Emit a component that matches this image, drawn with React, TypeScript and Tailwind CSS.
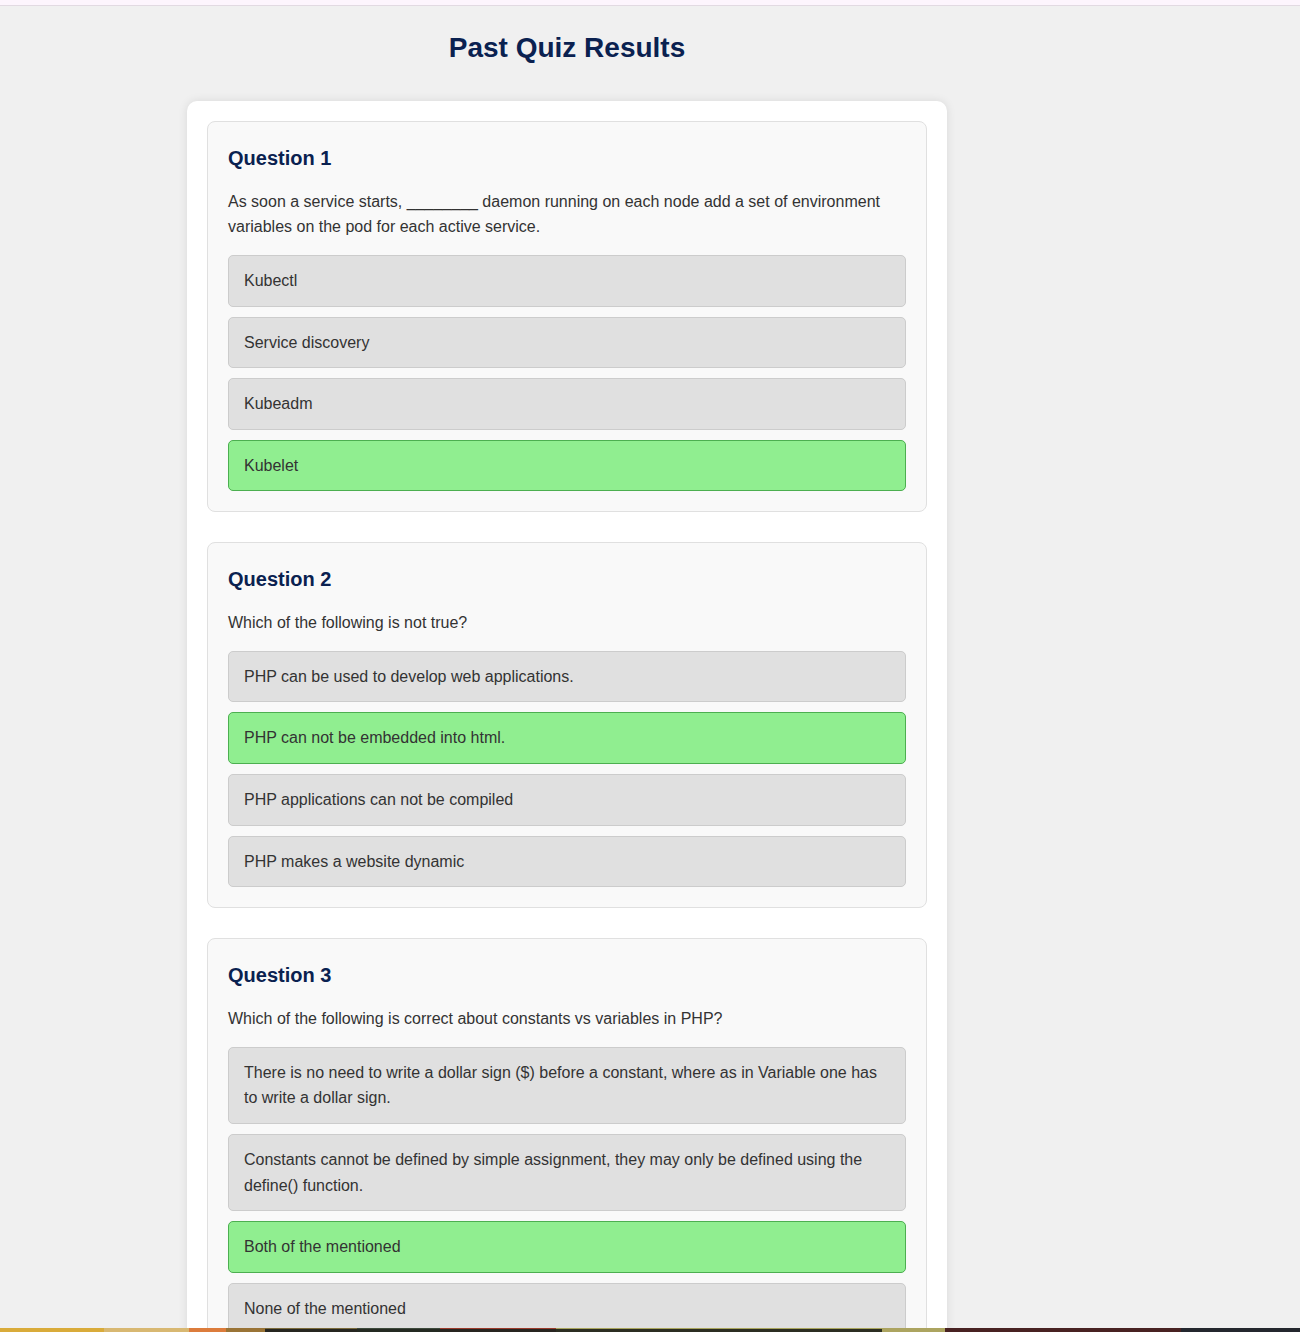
import React from "react";

type Q = { title: string; text: string; options: string[]; correct: number };

const questions: Q[] = [
  {
    title: "Question 1",
    text: "As soon a service starts, ________ daemon running on each node add a set of environment variables on the pod for each active service.",
    options: ["Kubectl", "Service discovery", "Kubeadm", "Kubelet"],
    correct: 3,
  },
  {
    title: "Question 2",
    text: "Which of the following is not true?",
    options: [
      "PHP can be used to develop web applications.",
      "PHP can not be embedded into html.",
      "PHP applications can not be compiled",
      "PHP makes a website dynamic",
    ],
    correct: 1,
  },
  {
    title: "Question 3",
    text: "Which of the following is correct about constants vs variables in PHP?",
    options: [
      "There is no need to write a dollar sign ($) before a constant, where as in Variable one has to write a dollar sign.",
      "Constants cannot be defined by simple assignment, they may only be defined using the define() function.",
      "Both of the mentioned",
      "None of the mentioned",
    ],
    correct: 2,
  },
];

export default function App() {
  return (
    <div
      className="min-h-[1332px] bg-[#f0f0f0] text-[#333333]"
      style={{ fontFamily: '"Liberation Sans", Arial, sans-serif' }}
    >
      <div className="h-[6px] bg-[#fdf5fd] border-b border-[#e2dae2]" />
      <div className="ml-[187px] w-[760px]">
        <h1 className="text-[28px] leading-[32px] font-bold text-[#0a2150] text-center pt-[26px] pb-[37px]">
          Past Quiz Results
        </h1>
        <div className="bg-white rounded-[10px] shadow-[0_0_10px_rgba(0,0,0,0.1)] p-5 flex flex-col gap-[30px]">
          {questions.map((q) => (
            <div
              key={q.title}
              className="bg-[#f9f9f9] border border-[#e0e0e0] rounded-[8px] px-5 pt-[25px] pb-[19.5px]"
            >
              <h3 className="text-[20px] leading-[22px] font-bold text-[#0a2150]">{q.title}</h3>
              <p className="text-[16px] leading-[25px] mt-5 mb-4">{q.text}</p>
              <div className="flex flex-col gap-[10px]">
                {q.options.map((o, i) => (
                  <div
                    key={o}
                    className={
                      i === q.correct
                        ? "bg-[#90ee90] border border-[#4caf50] rounded-[5px] px-[15px] py-3 text-[16px] leading-[25.6px]"
                        : "bg-[#e0e0e0] border border-[#cccccc] rounded-[5px] px-[15px] py-3 text-[16px] leading-[25.6px]"
                    }
                  >
                    {o}
                  </div>
                ))}
              </div>
            </div>
          ))}
        </div>
        <div className="h-10" />
      </div>
      <div className="fixed bottom-0 left-0 w-[1300px] h-[4px] flex">
        <div className="w-[104px] bg-[#d9ab3a]" />
        <div className="w-[85px] bg-[#d8b872]" />
        <div className="w-[37px] bg-[#dc7c3c]" />
        <div className="w-[39px] bg-[#9a7436]" />
        <div className="w-[92px] bg-[#262620] border-t border-[#7a6a3a]" />
        <div className="w-[83px] bg-[#242a22] border-t border-[#3e4a3c]" />
        <div className="w-[116px] bg-[#282520] border-t border-[#9a3a2a]" />
        <div className="w-[326px] bg-[#2c2e22] border-t border-[#a8a45c]" />
        <div className="w-[63px] bg-[#aca460]" />
        <div className="w-[236px] bg-[#482222]" />
        <div className="flex-1 bg-[#24272e]" />
      </div>
    </div>
  );
}
